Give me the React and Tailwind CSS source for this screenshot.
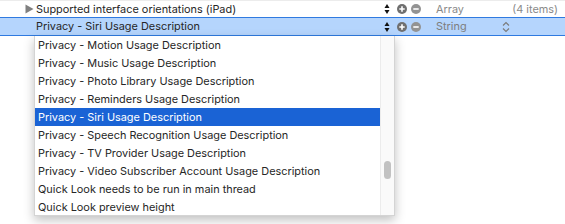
import React from "react";

const font = { fontFamily: "Inter, 'Liberation Sans', sans-serif" };

const items = [
  "Privacy - Motion Usage Description",
  "Privacy - Music Usage Description",
  "Privacy - Photo Library Usage Description",
  "Privacy - Reminders Usage Description",
  "Privacy - Siri Usage Description",
  "Privacy - Speech Recognition Usage Description",
  "Privacy - TV Provider Usage Description",
  "Privacy - Video Subscriber Account Usage Description",
  "Quick Look needs to be run in main thread",
  "Quick Look preview height",
];

function Stepper() {
  return (
    <svg width="6" height="12" viewBox="0 0 6 12" className="block">
      <path d="M3 1 L5.5 5 L0.5 5 Z" fill="#111" />
      <path d="M3 11 L5.5 7 L0.5 7 Z" fill="#111" />
    </svg>
  );
}

function PlusMinus() {
  return (
    <div className="flex items-center gap-[4px]">
      <svg width="10" height="10" viewBox="0 0 10 10" className="block">
        <circle cx="5" cy="5" r="5" fill="#6f6f6f" />
        <path d="M5 2.3 V7.7 M2.3 5 H7.7" stroke="#fff" strokeWidth="1.6" />
      </svg>
      <svg width="10" height="10" viewBox="0 0 10 10" className="block">
        <circle cx="5" cy="5" r="5" fill="#939393" />
        <path d="M2.3 5 H7.7" stroke="#fff" strokeWidth="1.6" />
      </svg>
    </div>
  );
}

export default function App() {
  return (
    <div
      className="relative w-[565px] h-[224px] overflow-hidden bg-white text-[10.9px] text-[#262626]"
      style={font}
    >
      {/* row 1 */}
      <div className="flex items-center h-[17px] border-t border-[#ececec]">
        <div className="w-[384px] flex items-center pl-[25px]">
          <svg width="9" height="10" viewBox="0 0 9 10" className="block mr-[2px]">
            <path d="M0.5 0.5 L8.5 5 L0.5 9.5 Z" fill="#808080" />
          </svg>
          <span className="truncate">Supported interface orientations (iPad)</span>
        </div>
        <div className="w-[13px] flex items-center">
          <Stepper />
        </div>
        <PlusMinus />
        <span className="ml-[15px] w-[60px] text-[#8a8a8a]">Array</span>
        <span className="flex-1 text-right pr-[7px] text-[#8a8a8a]">(4 items)</span>
      </div>

      {/* row 2, selected */}
      <div className="flex items-center h-[19px] bg-[#b5d5fd] border-y border-[#2f7ae0]">
        <div className="w-[384px] flex items-center pl-[36px]">
          <span className="truncate">Privacy - Siri Usage Description</span>
        </div>
        <div className="w-[13px] flex items-center">
          <Stepper />
        </div>
        <PlusMinus />
        <span className="ml-[15px] w-[66px] text-[#7d7d7d]">String</span>
        <svg width="8" height="12" viewBox="0 0 8 12" className="block">
          <path d="M1 4.5 L4 1.5 L7 4.5 M1 7.5 L4 10.5 L7 7.5" stroke="#7a7a7a" strokeWidth="1.1" fill="none" />
        </svg>
      </div>

      {/* popup menu */}
      <div className="absolute left-[34px] top-[36px] w-[361px] h-[180px] flex bg-white border border-[#d4d4d4] border-t-0 shadow-[0_4px_10px_rgba(0,0,0,0.25)]">
        <ul className="w-[345px] flex flex-col">
          {items.map((it) => (
            <li
              key={it}
              className={
                "h-[18px] leading-[18px] pl-[3px] whitespace-nowrap " +
                (it === "Privacy - Siri Usage Description" ? "bg-[#1a63d5] text-white" : "")
              }
            >
              {it}
            </li>
          ))}
        </ul>
        <div className="flex-1 bg-[#fafafa] border-l border-[#ececec] flex justify-center pt-[125px]">
          <div className="w-[7px] h-[18px] rounded-full bg-[#c2c2c2]" />
        </div>
      </div>
    </div>
  );
}
